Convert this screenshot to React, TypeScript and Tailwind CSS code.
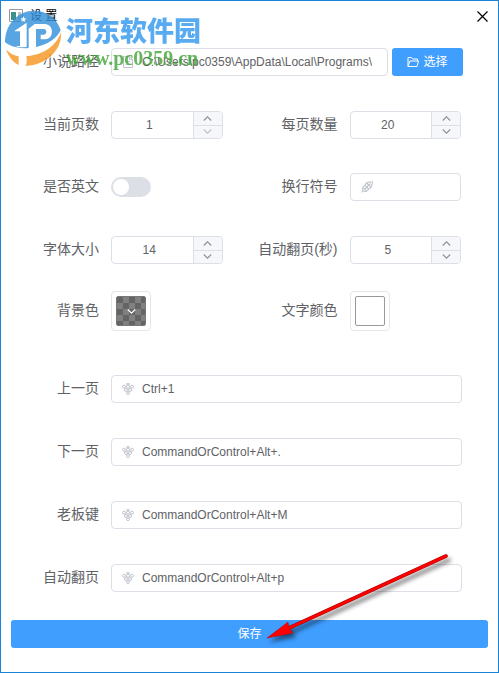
import React from "react";

const cjk = "font-['Liberation_Sans','Noto_Sans_CJK_SC',sans-serif]";

function Grape() {
  return (
    <svg className="h-3 w-3" viewBox="0 0 12 12" fill="none" stroke="currentColor" strokeWidth="1" aria-hidden="true">
      <path d="M6 0v2M4 1h4" />
      <circle cx="2" cy="3.700" r="1.500" />
      <circle cx="6" cy="3.700" r="1.500" />
      <circle cx="10" cy="3.700" r="1.500" />
      <circle cx="4" cy="7" r="1.500" />
      <circle cx="8" cy="7" r="1.500" />
      <circle cx="6" cy="10.200" r="1.400" />
    </svg>
  );
}

function DocumentIcon() {
  return (
    <svg className="h-3 w-3" viewBox="0 0 12 12" fill="none" stroke="currentColor" aria-hidden="true">
      <path d="M1.5 0.5h6l3 3v8h-9zM7.5 0.5v3h3M3.5 5.5h5M3.5 8.5h5" />
    </svg>
  );
}

function Feather() {
  return (
    <svg className="h-3 w-3" viewBox="0 0 12 12" fill="none" stroke="currentColor" strokeWidth="1.100" aria-hidden="true">
      <path d="M.6 11.400 2.400 9.600M2.200 9.800C.8 7.600 1.800 5.200 4 4.400 4.600 2.400 6.200 1.200 8 1.400 9 .5 10.200.6 11.200.8c.3 1 .3 2.200-.6 3.200.2 1.800-1 3.400-3 4C6.800 10.200 4.400 11.200 2.200 9.800zM4 4.400l3.600 3.600M2.400 6.800l3 3M6 2.600l3.800 3.200M3.500 8.500l6-6" />
    </svg>
  );
}

function FolderOpen() {
  return (
    <svg className="h-3 w-3" viewBox="0 0 12 12" fill="none" stroke="currentColor" aria-hidden="true">
      <path d="M1 10.500v-9h3.500l1.200 1.500h4.800v2M1 10.500l1.800-5.500h8.700l-1.500 5.500z" />
    </svg>
  );
}

function Chevron({ up = false }: { up?: boolean }) {
  return (
    <svg className="h-[5px] w-[9px]" viewBox="0 0 9 5" fill="none" stroke="currentColor" strokeWidth="1.200" aria-hidden="true">
      <path d={up ? "M.8 4.500 4.500.8 8.200 4.500" : "M.8.5 4.500 4.200 8.200.5"} />
    </svg>
  );
}

function Row({ label, id, children }: { label: string; id: string; children: React.ReactNode }) {
  return (
    <div className="flex items-center gap-3">
      <label htmlFor={id} className="w-[88px] shrink-0 pb-0.5 text-right text-sm leading-5 whitespace-nowrap">
        {label}
      </label>
      {children}
    </div>
  );
}

function TextBox({ id, value, icon }: { id: string; value: string; icon: React.ReactNode }) {
  return (
    <div className="flex h-7 min-w-0 flex-1 items-center rounded border border-[#dcdfe6] bg-white pr-[15px] pl-2.5">
      <span className="mr-2 shrink-0 text-[#c0c4cc]">{icon}</span>
      <input id={id} defaultValue={value} className="h-full w-full min-w-0 bg-transparent text-xs outline-none" />
    </div>
  );
}

function NumberBox({ id, value, atMin = false }: { id: string; value: number; atMin?: boolean }) {
  return (
    <div className="flex h-7 min-w-0 flex-1 overflow-hidden rounded border border-[#dcdfe6] bg-white">
      <input
        id={id}
        inputMode="numeric"
        defaultValue={value}
        className="h-full w-full min-w-0 flex-1 bg-transparent pr-1.5 text-center text-xs outline-none"
      />
      <div className="flex w-[29px] shrink-0 flex-col divide-y divide-[#dcdfe6] border-l border-[#dcdfe6] bg-[#f5f7fa] text-[#909399]">
        <button type="button" aria-label="+" className="flex flex-1 items-center justify-center">
          <Chevron up />
        </button>
        <button
          type="button"
          aria-label="-"
          className={atMin ? "flex flex-1 items-center justify-center text-[#c0c4cc]" : "flex flex-1 items-center justify-center"}
        >
          <Chevron />
        </button>
      </div>
    </div>
  );
}

function Watermark() {
  return (
    <div className="pointer-events-none absolute top-2 left-[3px] flex gap-0.5 opacity-80">
      <svg className="h-[58px] w-[60px]" viewBox="12 27 180 174" aria-hidden="true">
        <path fill="#fff" d="M18 120C20 150 40 172 62 176L78 198C150 195 184 150 183 95L120 60Z" />
        <path fill="#2f8fdb" d="M15 126C16 70 56 32 102 32c38 0 68 22 80 58-8 18-24 32-46 42-30 13-62 16-90 9-12-3-23-7-31-15z" />
        <path fill="#f7941d" d="M183 97c4 52-42 98-106 101 4-8 4-20 2-30 54-2 92-34 104-71z" />
        <path fill="#f7941d" d="M18 148c10 12 24 19 38 21v26C38 186 24 168 18 148z" />
        <path fill="#fff" d="M44 92 80 68v72c-10 2-20 2-30 0V138h10V94H44z" />
        <path fill="#fff" d="M86 86 104 72h30c28 0 30 44 2 46h-14v-14h10c10-2 9-17-1-17h-23v72c-8 6-15 8-22 8z" />
        <path fill="#fff" d="M70 49l3 6 6 1-5 4 1 6-5-3-6 3 2-6-5-4 6-1z" />
      </svg>
      <div className="flex flex-col pt-[3px] whitespace-nowrap">
        <span className="font-['Noto_Sans_CJK_SC',sans-serif] text-[27px] leading-9 font-black text-[#2f97ee]">河东软件园</span>
        <span className="font-['Liberation_Serif',serif] text-xl leading-5 font-bold text-[#3fa535]">www.pc0359.cn</span>
      </div>
    </div>
  );
}

const shortcuts = [
  { id: "prev", label: "上一页", value: "Ctrl+1" },
  { id: "next", label: "下一页", value: "CommandOrControl+Alt+." },
  { id: "boss", label: "老板键", value: "CommandOrControl+Alt+M" },
  { id: "auto", label: "自动翻页", value: "CommandOrControl+Alt+p" },
];

export default function App() {
  return (
    <main className={`relative min-h-screen border border-[#1883d7] bg-white text-[#606266] ${cjk}`}>
      <header className="flex h-[30px] items-center justify-between pr-2.5 pl-2 text-black">
        <div className="flex items-center gap-[7px]">
          <svg className="h-3.5 w-3.5" viewBox="0 0 14 14" aria-hidden="true">
            <path fill="#fff" stroke="#999" d="M.5.5h13v12H.5z" />
            <path fill="#3d8f8a" d="M2 3h5v8H2z" />
            <path fill="#b9c0c6" d="M9 3h3v8H9z" />
          </svg>
          <h1 className="text-xs leading-4">设 置</h1>
        </div>
        <button type="button" aria-label="关闭">
          <svg className="h-[11px] w-[11px]" viewBox="0 0 11 11" stroke="currentColor" strokeWidth="1.200" aria-hidden="true">
            <path d="M.5.500l10 10M10.500.500l-10 10" />
          </svg>
        </button>
      </header>

      <form className="px-2.5 pt-[17px]">
        <div className="flex items-center gap-1 pr-[25px]">
          <div className="min-w-0 flex-1">
            <Row label="小说路径" id="path">
              <TextBox id="path" value="C:\Users\pc0359\AppData\Local\Programs\" icon={<DocumentIcon />} />
            </Row>
          </div>
          <button type="button" className="flex h-7 w-[71px] items-center justify-center gap-1 rounded-[3px] bg-[#409eff] text-xs text-white">
            <FolderOpen />
            选择
          </button>
        </div>

        <div className="mt-[35px] grid grid-cols-2 gap-y-[34px] *:pr-[27px]">
          <Row label="当前页数" id="page">
            <NumberBox id="page" value={1} atMin />
          </Row>
          <Row label="每页数量" id="size">
            <NumberBox id="size" value={20} />
          </Row>
          <Row label="是否英文" id="english">
            <input
              id="english"
              type="checkbox"
              role="switch"
              className="h-5 w-10 appearance-none rounded-full bg-[#dcdfe6] p-0.5 before:block before:h-4 before:w-4 before:rounded-full before:bg-white checked:bg-[#409eff] checked:before:ml-5"
            />
          </Row>
          <Row label="换行符号" id="newline">
            <TextBox id="newline" value="" icon={<Feather />} />
          </Row>
        </div>

        <div className="mt-[35px] grid grid-cols-2 *:pr-[27px]">
          <Row label="字体大小" id="font">
            <NumberBox id="font" value={14} />
          </Row>
          <Row label="自动翻页(秒)" id="interval">
            <NumberBox id="interval" value={5} />
          </Row>
        </div>

        <div className="mt-[27px] grid grid-cols-2">
          <Row label="背景色" id="background">
            <button id="background" type="button" className="h-10 w-10 rounded border border-[#e6e6e6] p-1">
              <span className="flex h-full items-center justify-center rounded-xs border border-[#777] bg-[conic-gradient(#808080_25%,#646464_0_50%,#808080_0_75%,#646464_0)] bg-size-[12px_12px] text-white">
                <Chevron />
              </span>
            </button>
          </Row>
          <Row label="文字颜色" id="color">
            <button id="color" type="button" className="h-10 w-10 rounded border border-[#e6e6e6] p-1">
              <span className="block h-full rounded-xs border border-[#999] bg-white" />
            </button>
          </Row>
        </div>

        <div className="mt-11 flex flex-col gap-[35px] pr-[26px]">
          {shortcuts.map((s) => (
            <Row key={s.id} label={s.label} id={s.id}>
              <TextBox id={s.id} value={s.value} icon={<Grape />} />
            </Row>
          ))}
        </div>

        <button type="button" className="mt-7 mb-6 h-7 w-full rounded-[3px] bg-[#409eff] text-xs text-white">
          保存
        </button>
      </form>

      <Watermark />

      <svg className="pointer-events-none absolute top-[545px] left-[258px] h-[105px] w-[200px] drop-shadow-[3px_4px_2px_rgba(0,0,0,0.5)]" viewBox="259 546 200 105" aria-hidden="true">
        <path d="M289 628 446 556" stroke="#a00" strokeWidth="3.600" strokeLinecap="round" />
        <path d="M289 628 446 556" stroke="#f00" strokeWidth="2.600" strokeLinecap="round" />
        <path d="M267 638 288 622 289 628 293 633Z" fill="#f00" stroke="#b00" strokeWidth="0.500" />
      </svg>
    </main>
  );
}
